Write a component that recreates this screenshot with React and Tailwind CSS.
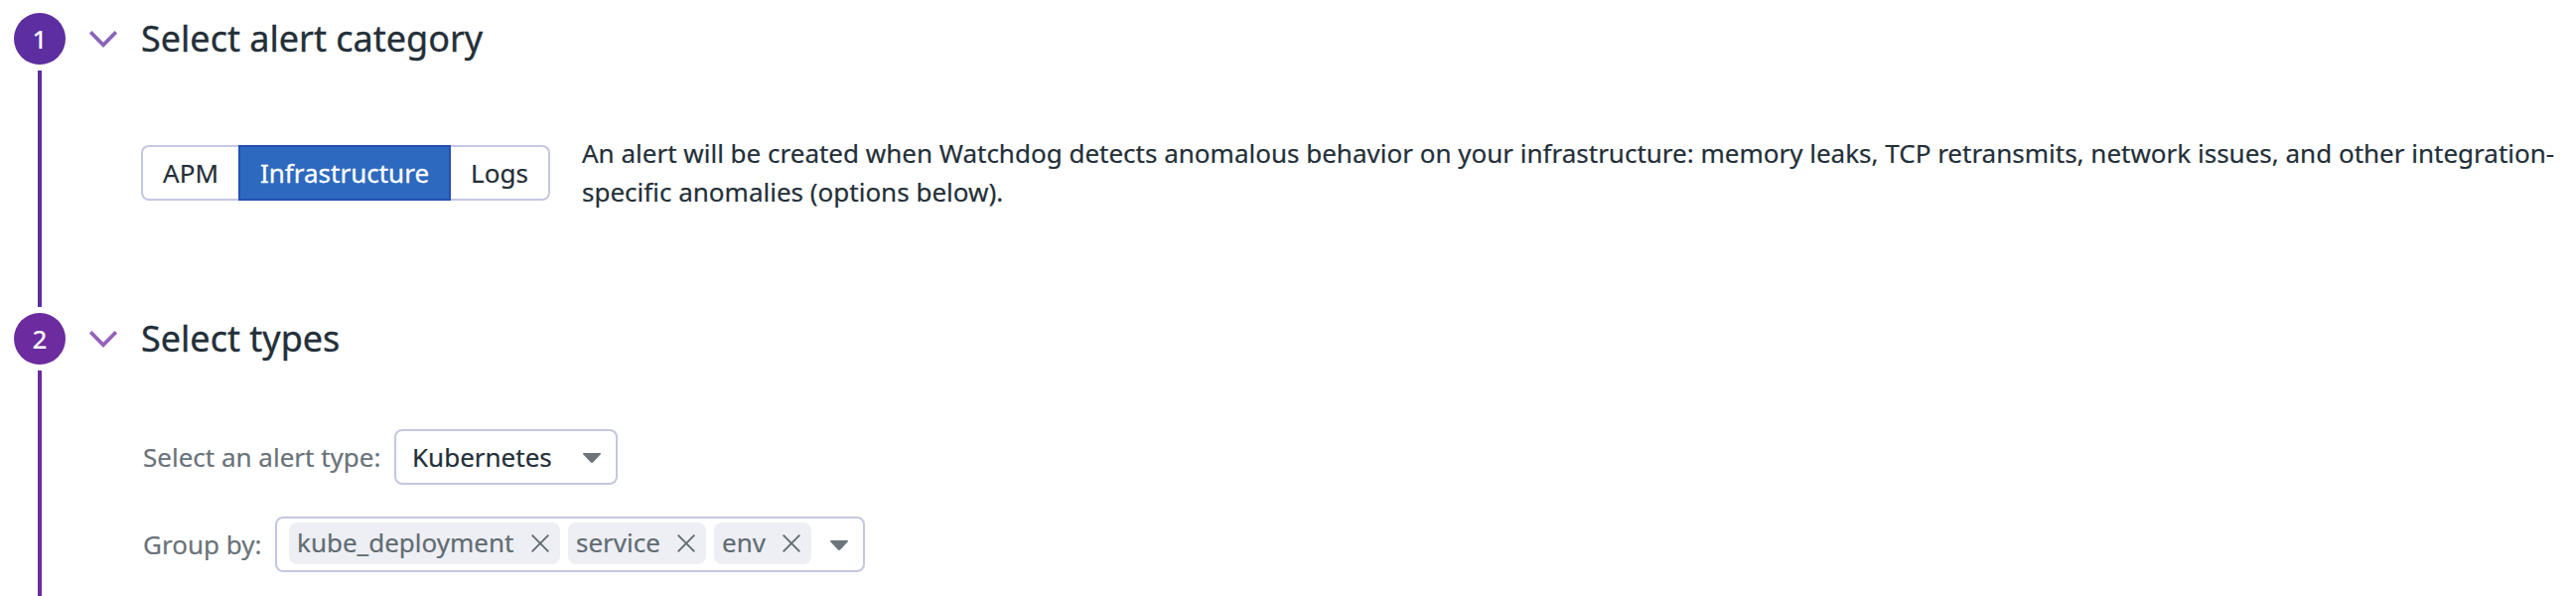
import React from "react";

function Chevron({ className }) {
  return (
    <svg className={`mt-[18px] ml-6 h-[18px] w-7 shrink-0 ${className}`} viewBox="0 0 28 18" fill="none">
      <path d="M1.2 1.3 L14 14.4 L26.8 1.3" stroke="currentColor" strokeWidth="3.7" />
    </svg>
  );
}

function Caret({ className }) {
  return (
    <svg className={`h-[10px] w-[18px] shrink-0 ${className}`} viewBox="0 0 18 10">
      <path d="M0.6 0 H17.4 Q18.4 0.4 17.6 1.4 L10.4 9.2 Q9 10.6 7.6 9.2 L0.4 1.4 Q-0.4 0.4 0.6 0 Z" fill="#6c757c" />
    </svg>
  );
}

function Tag({ label, width }) {
  return (
    <span className={`flex h-[42px] shrink-0 items-center justify-between rounded-lg bg-[#eeeff5] pr-[11px] pl-2 ${width}`}>
      <span className="-mt-0.5">{label}</span>
      <svg className="h-[18px] w-[18px] shrink-0" viewBox="0 0 18 18" fill="none">
        <path d="M0.7 0.7 L17.3 17.3 M17.3 0.7 L0.7 17.3" stroke="#626c72" strokeWidth="1.9" />
      </svg>
    </span>
  );
}

function Step({ number, title, badge, line, chevron, height, children }) {
  return (
    <section className={`flex pl-[14px] ${height}`}>
      <div className="flex w-[52px] shrink-0 flex-col items-center gap-1.5">
        <div className={`flex h-[52px] w-[52px] shrink-0 items-center justify-center rounded-full font-medium text-white [-webkit-text-stroke:0] ${badge}`}>
          {number}
        </div>
        <div className={`w-1 flex-1 ${line}`} />
      </div>
      <Chevron className={chevron} />
      <div className="min-w-0 flex-1 pl-6">
        <h2 className="h-[52px] text-[36px] leading-[52px] [-webkit-text-stroke:0.35px_currentColor]">{title}</h2>
        {children}
      </div>
    </section>
  );
}

export default function App() {
  return (
    <main className="h-[600px] overflow-hidden bg-white pt-[13px] font-['Noto_Sans',sans-serif] text-[26px] leading-[39px] whitespace-nowrap text-[#232f38] [-webkit-text-stroke:0.2px_currentColor]">
      <Step number="1" title="Select alert category" badge="bg-[#5c2e9f]" line="bg-[#5c2e9f]" chevron="text-[#8a64ba]" height="h-[296px]">
        <div className="mt-[70px] flex items-center">
          <div className="flex h-14 shrink-0">
            <button className="w-[98px] rounded-l-lg border-2 border-r-0 border-[#c4c7df]">APM</button>
            <button className="w-[214px] border-2 border-[#2350b5] bg-[#2d69be] text-white [-webkit-text-stroke:0.3px_white]">Infrastructure</button>
            <button className="w-[100px] rounded-r-lg border-2 border-l-0 border-[#c4c7df]">Logs</button>
          </div>
          <p className="ml-8">
            An alert will be created when Watchdog detects anomalous behavior on your infrastructure: memory leaks, TCP retransmits, network issues, and other integration-
            <br />
            specific anomalies (options below).
          </p>
        </div>
      </Step>
      <div className="h-1.5" />
      <Step number="2" title="Select types" badge="bg-[#6c2b9e]" line="bg-[#6c2b9e]" chevron="text-[#9662ba]" height="h-[300px]">
        <div className="mt-[65px] flex h-14 items-center pl-0.5 text-[#69737a]">
          <span className="w-[253px] shrink-0">Select an alert type:</span>
          <div className="flex h-14 w-[225px] items-center justify-between rounded-lg border-2 border-[#c4c7df] pr-[15px] pl-4 text-[#232f38]">
            Kubernetes
            <Caret className="mt-0.5" />
          </div>
        </div>
        <div className="mt-8 flex h-14 items-center pl-0.5 text-[#69737a]">
          <span className="w-[133px] shrink-0">Group by:</span>
          <div className="flex h-14 w-[594px] gap-2 rounded-lg border-2 border-[#c4c7df] pt-1 pl-3 text-[#626c72]">
            <Tag label="kube_deployment" width="w-[273px]" />
            <Tag label="service" width="w-[139px]" />
            <Tag label="env" width="w-[98px]" />
            <Caret className="mt-[18px] ml-[11px]" />
          </div>
        </div>
      </Step>
    </main>
  );
}
